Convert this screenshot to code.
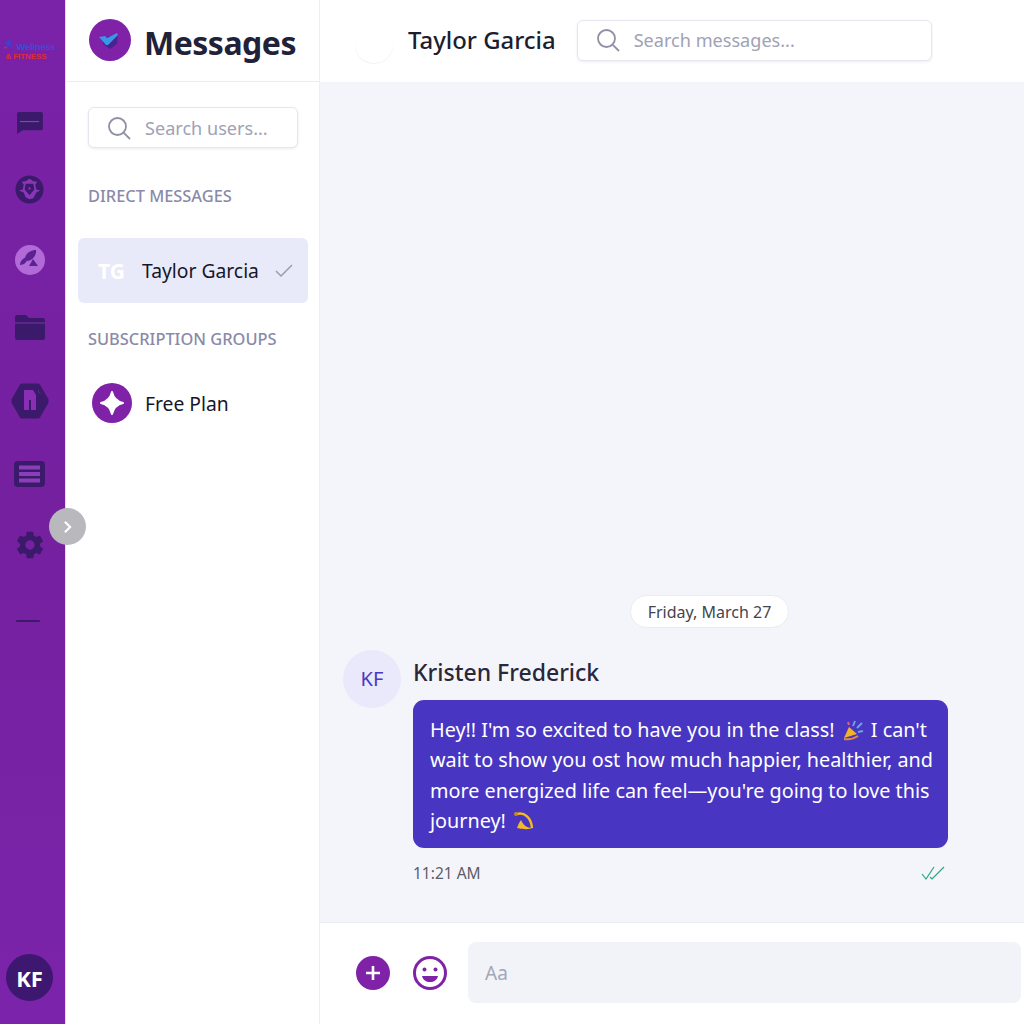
<div class="app">
  <nav class="rail">
    <div class="logo">
      <svg class="figure" viewBox="0 0 14 16"><path d="M9 0L6 5 1 7l5 1-3 7 5-5 5 4-3-6 3-3-5 0z" fill="#3f3fd0"/><path d="M1 13l4-2 1 2z" fill="#d0303a"/></svg>
      <span class="logo-a">Wellness</span>
      <span class="logo-b">&amp; FITNESS</span>
    </div>
    <svg class="ri r1" viewBox="0 0 28 24"><path d="M3 1h23a2 2 0 0 1 2 2v15a2 2 0 0 1-2 2H7l-6 4V3a2 2 0 0 1 2-2z" fill="#3c1a6b"/><path d="M4 11h20" stroke="#8a3fb8" stroke-width="1.2"/></svg>
    <svg class="ri r2" viewBox="0 0 30 30"><circle cx="15" cy="15" r="14.5" fill="#3c1a6b"/><path d="M15 4l4 2.500 4 .500-2 3 1 5 4 1-4 2-3 6-4 1-4-2-2-5-5-2 4-1 1-5-2-3 4-.500z" fill="#8a35b8"/><path d="M11 9h8l1 6-5 6-5-6z" fill="#3c1a6b"/><circle cx="15" cy="14" r="1.200" fill="#8a35b8"/></svg>
    <svg class="ri r3" viewBox="0 0 30 30"><circle cx="15" cy="15" r="15" fill="#b26ad8"/><path d="M10 14c0-5 5-9 11-9 1 5-4 11-9 11z" fill="#5b2391"/><path d="M5 20c0-4 3-7 7-8 1 4-2 8-7 8z" fill="#5b2391"/><path d="M14 21l4-7 5 7z" fill="#5b2391"/></svg>
    <svg class="ri r4" viewBox="0 0 30 25"><path d="M2 0h9l3 3h14a2 2 0 0 1 2 2v18a2 2 0 0 1-2 2H2a2 2 0 0 1-2-2V2a2 2 0 0 1 2-2z" fill="#3c1a6b"/><path d="M0 8h30" stroke="#7f2fb0" stroke-width="1"/></svg>
    <svg class="ri r5" viewBox="0 0 38 36"><path d="M11 3h16l8 14v2l-8 14H11L3 19v-2z" fill="#3c1a6b" stroke="#3c1a6b" stroke-width="5" stroke-linejoin="round"/><path d="M13 7h9l3 5v15h-5V17h-2v10h-5z" fill="#8a2fb5"/><path d="M28 6c-1 2 0 4 2 4-2 1-4-2-2-4z" fill="#8a2fb5"/></svg>
    <svg class="ri r6" viewBox="0 0 31 26"><rect width="31" height="26" rx="4" fill="#3c1a6b"/><path d="M5 6.500h21M5 13h21M5 19.500h21" stroke="#8a3fb8" stroke-width="4"/></svg>
    <svg class="ri r7" viewBox="0 0 24 24"><path fill="#3c1a6b" fill-rule="evenodd" d="M19.430 12.980a7.800 7.800 0 0 0 0-1.960l2.110-1.650a.5.500 0 0 0 .12-.64l-2-3.460a.5.500 0 0 0-.61-.22l-2.490 1a7.300 7.300 0 0 0-1.690-.98l-.38-2.650A.49.490 0 0 0 14 2h-4a.49.490 0 0 0-.49.420l-.38 2.650a7.700 7.700 0 0 0-1.690.98l-2.490-1a.5.500 0 0 0-.61.220l-2 3.460a.49.490 0 0 0 .12.640l2.110 1.650a7.900 7.900 0 0 0 0 1.960l-2.110 1.650a.5.500 0 0 0-.12.640l2 3.460a.5.500 0 0 0 .61.220l2.490-1c.52.400 1.080.730 1.690.98l.38 2.650c.03.240.24.420.49.420h4c.25 0 .46-.18.490-.42l.38-2.650a7.700 7.700 0 0 0 1.690-.98l2.490 1a.5.500 0 0 0 .61-.22l2-3.460a.5.500 0 0 0-.12-.64zM12 15.500a3.500 3.500 0 1 1 0-7 3.500 3.500 0 0 1 0 7z"/></svg>
    <div class="ri r8"></div>
    <div class="me">KF</div>
  </nav>
  <button class="collapse" aria-label="Expand">
    <svg viewBox="0 0 12 16" width="11" height="14"><path d="M3 2l6 6-6 6" fill="none" stroke="#fff" stroke-width="2.400"/></svg>
  </button>

  <aside class="side">
    <header class="side-head">
      <svg class="brand" viewBox="0 0 42 42">
        <circle cx="21" cy="21" r="21" fill="#7f22a8"/>
        <path d="M14 19l15-4-1 10-7 5-7-5z" fill="#4a2390"/>
        <path d="M10 18l6-1 2 2 10-5 1 2-10 10-2 0-7-8z" fill="#3a96e6"/>
      </svg>
      <h1>Messages</h1>
    </header>
    <div class="side-body">
      <label class="search small">
        <svg viewBox="0 0 24 24" width="24" height="24"><circle cx="10.500" cy="10.500" r="8.500" fill="none" stroke="#8f90a3" stroke-width="1.800"/><path d="M16.800 16.800L23 23" stroke="#8f90a3" stroke-width="1.800"/></svg>
        <span>Search users...</span>
      </label>
      <h2 class="direct">DIRECT MESSAGES</h2>
      <div class="row active">
        <span class="tg">TG</span>
        <span class="nm">Taylor Garcia</span>
        <svg viewBox="0 0 18 15" width="18" height="15"><path d="M1 8l5 5L17 2" fill="none" stroke="#9a9cab" stroke-width="1.500"/></svg>
      </div>
      <h2 class="subs">SUBSCRIPTION GROUPS</h2>
      <div class="row plan">
        <svg viewBox="0 0 40 40" width="40" height="40"><circle cx="20" cy="20" r="20" fill="#7f22a8"/><path d="M20 9c1.500 6.500 4.500 9.500 11 11-6.500 1.500-9.500 4.500-11 11-1.500-6.500-4.500-9.500-11-11 6.500-1.500 9.500-4.500 11-11z" fill="#fff" stroke="#fff" stroke-width="2" stroke-linejoin="round"/></svg>
        <span class="nm">Free Plan</span>
      </div>
    </div>
  </aside>

  <main class="main">
    <header class="top">
      <span class="ghost"></span>
      <span class="peer">Taylor Garcia</span>
      <label class="search wide">
        <svg viewBox="0 0 24 24" width="24" height="24"><circle cx="10.500" cy="10.500" r="8.500" fill="none" stroke="#8f90a3" stroke-width="1.800"/><path d="M16.800 16.800L23 23" stroke="#8f90a3" stroke-width="1.800"/></svg>
        <span>Search messages...</span>
      </label>
    </header>
    <section class="thread">
      <div class="date"><span>Friday, March 27</span></div>
      <article class="msg">
        <div class="av">KF</div>
        <div class="body">
          <div class="who">Kristen Frederick</div>
          <div class="bubble">Hey!! I'm so excited to have you in the class! <svg class="emo" viewBox="0 0 22 22"><path d="M2 19l5-11 8 7z" fill="#f0b429"/><path d="M2 20c6 1 11-1 14-3" stroke="#e08a3c" stroke-width="2" fill="none"/><path d="M11 7l2-5M15 9l5-5M16 13l5-1" stroke="#6aa6d8" stroke-width="2"/><path d="M6 3l1 3" stroke="#d45fa8" stroke-width="2"/></svg> I can't wait to show you ost how much happier, healthier, and more energized life can feel—you're going to love this journey! <svg class="emo" viewBox="0 0 22 22"><path d="M4 4c7-2 14 3 15 14" fill="none" stroke="#f5b921" stroke-width="2.500"/><path d="M4 18c8 2 14 1 15 0-5 0-9-3-11-8-2 3-3 5-4 8z" fill="#f5b921"/><circle cx="3" cy="4" r="2" fill="#c98a1c"/></svg></div>
          <div class="meta">
            <span>11:21 AM</span>
            <svg viewBox="0 0 24 14" width="24" height="14"><path d="M1 8l4 5L13 1M9 11l2 2L23 1" fill="none" stroke="#2fa57f" stroke-width="1.200"/></svg>
          </div>
        </div>
      </article>
    </section>
    <footer class="composer">
      <button class="plus" aria-label="Add"><svg viewBox="0 0 34 34" width="34" height="34"><circle cx="17" cy="17" r="17" fill="#7f22a8"/><path d="M17 10v14M10 17h14" stroke="#fff" stroke-width="2.600"/></svg></button>
      <button class="smile" aria-label="Emoji"><svg viewBox="0 0 34 34" width="34" height="34"><circle cx="17" cy="17" r="15.500" fill="none" stroke="#7f22a8" stroke-width="3"/><circle cx="11.500" cy="13.500" r="2" fill="#7f22a8"/><circle cx="22.500" cy="13.500" r="2" fill="#7f22a8"/><path d="M9 20h16c-1 4-4 6-8 6s-7-2-8-6z" fill="#7f22a8"/></svg></button>
      <div class="input">Aa</div>
    </footer>
  </main>
</div>

<style>
  :global(body) { margin: 0; overflow: hidden; }
  .app {
    display: flex;
    width: 1024px;
    height: 1024px;
    position: relative;
    overflow: hidden;
    font-family: "Noto Sans", "Open Sans", sans-serif;
    background: #fff;
  }
  .rail {
    width: 66px;
    box-sizing: border-box;
    flex: none;
    background: linear-gradient(180deg, #7a22a8 0%, #74209f 50%, #7b24ab 100%);
    display: flex;
    flex-direction: column;
    align-items: center;
    border-right: 1px solid #ead9f3;
    padding-right: 6px;
  }
  .logo {
    margin-top: 37px;
    height: 25px;
    width: 58px;
    display: grid;
    grid-template-columns: 14px 1fr;
    grid-template-rows: 14px 9px;
    font-family: "Liberation Sans", sans-serif;
    font-weight: 700;
    white-space: nowrap;
    overflow: hidden;
  }
  .figure { grid-row: 1; grid-column: 1; width: 12px; height: 14px; margin-left: 1px; }
  .logo-a { grid-row: 1; grid-column: 2; color: #3d4bd8; font-size: 9.500px; line-height: 20px; margin-left: 2px; letter-spacing: -0.3px; }
  .logo-b { grid-row: 2; grid-column: 1 / 3; color: #d8303a; font-size: 8px; line-height: 12px; margin-left: 5px; letter-spacing: -0.1px; }
  .ri { display: block; flex: none; }
  .r1 { width: 27px; height: 23px; margin-top: 49px; margin-left: -1px; }
  .r2 { width: 29px; height: 29px; margin-top: 41px; }
  .r3 { width: 30px; height: 30px; margin-top: 41px; }
  .r4 { width: 30px; height: 25px; margin-top: 40px; }
  .r5 { width: 38px; height: 36px; margin-top: 43px; margin-left: 1px; }
  .r6 { width: 31px; height: 26px; margin-top: 42px; }
  .r7 { width: 32px; height: 32px; margin-top: 42px; }
  .r8 { width: 24px; height: 2px; background: #3c1a6b; margin-top: 59px; margin-left: -4px; border-radius: 1px; }
  .me {
    margin-top: auto;
    margin-bottom: 23px;
    width: 47px;
    height: 47px;
    border-radius: 50%;
    background: #3d1770;
    color: #fff;
    font-weight: 700;
    font-size: 22px;
    display: flex;
    align-items: center;
    justify-content: center;
  }
  .collapse {
    position: absolute;
    left: 49px;
    top: 508px;
    width: 37px;
    height: 37px;
    border-radius: 50%;
    border: 0;
    padding: 0;
    background: #b9b8bd;
    display: flex;
    align-items: center;
    justify-content: center;
    z-index: 2;
  }
  .side {
    width: 254px;
    box-sizing: border-box;
    flex: none;
    border-right: 1px solid #eeeef5;
    display: flex;
    flex-direction: column;
    background: #fff;
  }
  .side-head {
    height: 82px;
    box-sizing: border-box;
    border-bottom: 1px solid #ebebf3;
    display: flex;
    align-items: center;
    gap: 13px;
    padding: 0 0 2px 23px;
  }
  .brand { width: 42px; height: 42px; }
  h1 { margin: 6px 0 0; font-size: 32px; font-weight: 700; color: #1f2238; letter-spacing: -0.5px; line-height: 44px; }
  .side-body { padding: 25px 11px 0 12px; }
  .search {
    display: flex;
    align-items: center;
    box-sizing: border-box;
    background: #fff;
    border: 1px solid #e6e6ef;
    border-radius: 6px;
    box-shadow: 0 1px 3px rgba(30, 30, 70, 0.08);
    color: #a0a2b5;
    font-size: 18.100px;
    height: 41px;
  }
  .search svg { flex: none; margin-right: 14px; }
  .small { width: 210px; margin-left: 10px; padding-left: 18px; }
  .wide { width: 355px; padding-left: 18px; margin-left: 21px; margin-bottom: 2px; }
  h2 { margin: 0; font-size: 16.400px; font-weight: 500; color: #8a8aa8; line-height: 22px; }
  .direct { margin: 37px 0 0 10px; }
  .subs { margin: 25px 0 0 10px; }
  .row { display: flex; align-items: center; }
  .active {
    margin-top: 31px;
    height: 65px;
    width: 230px;
    background: #e9eaf9;
    border-radius: 6px;
    box-sizing: border-box;
    padding-left: 20px;
  }
  .tg { color: #fff; font-weight: 700; font-size: 21px; width: 44px; }
  .nm { font-size: 19.300px; color: #16162a; }
  .active svg { margin-left: 16px; }
  .plan { margin: 33px 0 0 14px; gap: 13px; }
  .main { flex: 1; min-width: 0; display: flex; flex-direction: column; background: #f4f5fa; }
  .top {
    height: 82px;
    flex: none;
    background: #fff;
    display: flex;
    align-items: center;
    padding-left: 35px;
    box-sizing: border-box;
  }
  .ghost {
    width: 38px;
    height: 38px;
    border-radius: 50%;
    background: #fff;
    box-shadow: 0 1px 1px rgba(40, 40, 80, 0.06);
    margin-right: 15px;
    margin-top: 5px;
  }
  .peer { font-size: 23.900px; font-weight: 500; color: #1d1d30; margin-top: -4px; white-space: nowrap; }
  .thread {
    flex: 1;
    width: 756px;
    box-sizing: border-box;
    padding-left: 23px;
    display: flex;
    flex-direction: column;
    justify-content: flex-end;
    padding-bottom: 38px;
  }
  .date { display: flex; justify-content: center; margin-bottom: 22px; }
  .date span {
    background: #fff;
    border: 1px solid #ebebf2;
    border-radius: 17px;
    padding: 0 17px;
    height: 33px;
    line-height: 32px;
    box-sizing: border-box;
    font-size: 16px;
    color: #44444f;
  }
  .msg { display: flex; width: 605px; gap: 12px; }
  .av {
    width: 58px;
    height: 58px;
    flex: none;
    border-radius: 50%;
    background: #e9e9fb;
    color: #4a38c0;
    font-size: 20px;
    display: flex;
    align-items: center;
    justify-content: center;
  }
  .body { flex: 1; min-width: 0; margin-top: 5px; }
  .who { font-size: 23px; font-weight: 500; color: #28283a; line-height: 34px; }
  .bubble {
    margin-top: 11px;
    background: #4836c2;
    border-radius: 11px;
    color: #fff;
    padding: 15px 10px 11px 17px;
    font-size: 19.800px;
    line-height: 30.600px;
  }
  .emo { width: 22px; height: 22px; vertical-align: -4px; margin: 0 2px; }
  .meta {
    display: flex;
    justify-content: space-between;
    align-items: center;
    margin-top: 14px;
    padding-right: 3px;
    font-size: 15.500px;
    color: #5d5d68;
  }
  .composer {
    height: 102px;
    flex: none;
    box-sizing: border-box;
    background: #fff;
    border-top: 1px solid #ebebf2;
    display: flex;
    align-items: center;
    padding: 0 3px 2px 36px;
  }
  .plus, .smile { border: 0; padding: 0; background: none; width: 34px; height: 34px; flex: none; }
  .smile { margin-left: 23px; margin-right: 21px; }
  .input {
    flex: 1;
    height: 61px;
    background: #f2f3f8;
    border-radius: 8px;
    display: flex;
    align-items: center;
    padding-left: 17px;
    color: #a2a6b8;
    font-size: 19px;
  }
</style>
